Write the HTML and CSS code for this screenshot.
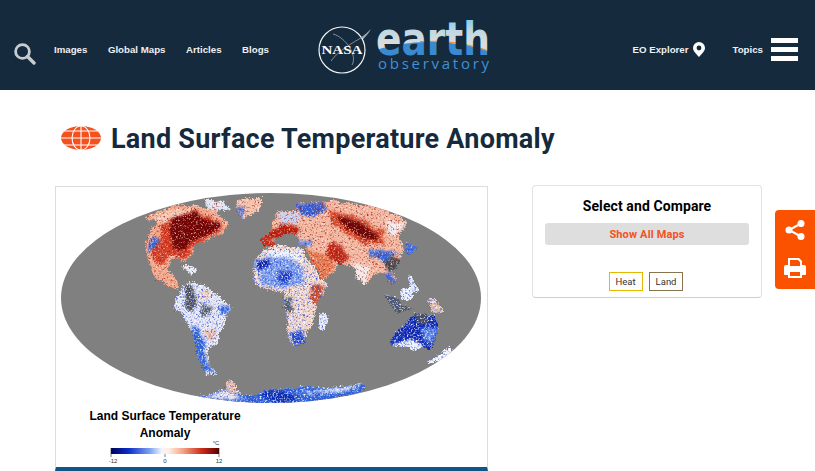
FILE: index.html
```html
<!DOCTYPE html>
<html lang="en">
<head>
  <meta charset="UTF-8">
  <meta name="viewport" content="width=device-width, initial-scale=1.0">
  <title>Land Surface Temperature Anomaly</title>
  <link rel="stylesheet" href="styles.css">
</head>
<body>
  <header class="site-header">
    <div class="nav-left">
      <svg class="search-icon" viewBox="0 0 22 22" width="22" height="22">
        <circle cx="8.500" cy="8.500" r="6.900" fill="none" stroke="#c9cccf" stroke-width="2.800"/>
        <path d="M13.500 13.500 L20 20" stroke="#c9cccf" stroke-width="3.400" stroke-linecap="round"/>
      </svg>
      <a class="nav-link" href="#">Images</a>
      <a class="nav-link" href="#">Global Maps</a>
      <a class="nav-link" href="#">Articles</a>
      <a class="nav-link" href="#">Blogs</a>
    </div>

    <svg class="logo" viewBox="318 0 174 90" width="174" height="90">
      <defs>
        <linearGradient id="earth-sky" gradientUnits="userSpaceOnUse" x1="0" y1="20" x2="0" y2="44">
          <stop offset="0" stop-color="#86cdea"/>
          <stop offset="0.45" stop-color="#c0d8e2"/>
          <stop offset="1" stop-color="#dcdcdc"/>
        </linearGradient>
        <pattern id="earth-fill" patternUnits="userSpaceOnUse" x="0" y="0" width="600" height="100">
          <rect x="370" y="10" width="125" height="50" fill="url(#earth-sky)"/>
          <path d="M370 52 Q430 31 495 53 V62 H370 Z" fill="#3a8ad2"/>
          <path d="M420 41.500 Q460 39 495 53" fill="none" stroke="#f08a2c" stroke-width="1"/>
        </pattern>
      </defs>
      <path d="M320 56 C340 53 360 40 371 29 C364 42 345 56 326 60" fill="#9aa6b0"/>
      <circle cx="342" cy="50" r="23" fill="#152a3d" stroke="#f2f4f5" stroke-width="1.200"/>
      <path d="M333 34 C345 37 358 55 352 65 M331 61 C338 51 352 43 366 35" fill="none" stroke="#9aa6b0" stroke-width="0.800"/>
      <text class="logo-nasa" x="342" y="54" text-anchor="middle" textLength="41" lengthAdjust="spacingAndGlyphs">NASA</text>
      <text class="logo-earth" x="376" y="55" textLength="114" lengthAdjust="spacingAndGlyphs" fill="url(#earth-fill)">earth</text>
      <text class="logo-sub" x="378" y="69" textLength="111">observatory</text>
    </svg>

    <div class="nav-right">
      <a class="nav-link" href="#">EO Explorer</a>
      <svg class="pin-icon" viewBox="0 0 12 15" width="12" height="15">
        <path fill-rule="evenodd" d="M6 0 A6 6 0 0 1 12 6 C12 9 8.500 12 6 15 C3.500 12 0 9 0 6 A6 6 0 0 1 6 0 Z M6 3.600 A2.400 2.400 0 1 0 6 8.400 A2.400 2.400 0 1 0 6 3.600 Z" fill="#fff"/>
      </svg>
      <a class="nav-link topics-link" href="#">Topics</a>
      <div class="burger"><span></span><span></span><span></span></div>
    </div>
  </header>

  <main class="page">
    <div class="title-row">
      <svg class="globe-icon" viewBox="0 0 40 24" width="40" height="24">
        <ellipse cx="20" cy="12" rx="20" ry="12" fill="#f4511e"/>
        <g fill="none" stroke="#fff" stroke-width="1.100">
          <ellipse cx="20" cy="12" rx="9" ry="12"/>
          <path d="M20 0 V24 M3 5 H37 M0 12 H40 M3 19 H37"/>
        </g>
      </svg>
      <h1>Land Surface Temperature Anomaly</h1>
    </div>

    <div class="columns">
      <figure class="map-figure">
        <svg class="world-map" viewBox="56 187 431 280" width="431" height="280">
          <defs>
            <clipPath id="globe-clip"><ellipse cx="271" cy="298" rx="210" ry="105"/></clipPath>
            <linearGradient id="scale-fill">
              <stop offset="0" stop-color="#00005a"/>
              <stop offset="0.16" stop-color="#0a2cc8"/>
              <stop offset="0.36" stop-color="#7ea2f0"/>
              <stop offset="0.47" stop-color="#f2f5fd"/>
              <stop offset="0.53" stop-color="#fdf0e8"/>
              <stop offset="0.66" stop-color="#f6a888"/>
              <stop offset="0.84" stop-color="#cc2c18"/>
              <stop offset="1" stop-color="#5a0000"/>
            </linearGradient>
            <filter id="rough-hot" x="-5%" y="-5%" width="110%" height="110%" color-interpolation-filters="sRGB">
              <feTurbulence type="fractalNoise" baseFrequency="0.1" numOctaves="4" seed="4" result="n1"/>
              <feDisplacementMap in="SourceGraphic" in2="n1" scale="8" xChannelSelector="R" yChannelSelector="G" result="shape"/>
              <feGaussianBlur in="shape" stdDeviation="1.100" result="soft"/>
              <feTurbulence type="fractalNoise" baseFrequency="0.55" numOctaves="2" seed="7" result="n2"/>
              <feDisplacementMap in="soft" in2="n2" scale="6" xChannelSelector="G" yChannelSelector="R" result="grain"/>
              <feComponentTransfer in="grain" result="land">
                <feFuncA type="linear" slope="6" intercept="-2.200"/>
              </feComponentTransfer>
              <feColorMatrix in="n2" values="0 0 0 0 1  0 0 0 0 0.94  0 0 0 0 0.92  2.600 0 0 0 -1.400"/>
              <feComposite in2="land" operator="in" result="light"/>
              <feColorMatrix in="n2" values="0 0 0 0 0.55  0 0 0 0 0.05  0 0 0 0 0.03  0 2.600 0 0 -1.400"/>
              <feComposite in2="land" operator="in" result="dark"/>
              <feMerge><feMergeNode in="land"/><feMergeNode in="dark"/><feMergeNode in="light"/></feMerge>
            </filter>
            <filter id="rough-cold" x="-5%" y="-5%" width="110%" height="110%" color-interpolation-filters="sRGB">
              <feTurbulence type="fractalNoise" baseFrequency="0.1" numOctaves="4" seed="4" result="n1"/>
              <feDisplacementMap in="SourceGraphic" in2="n1" scale="8" xChannelSelector="R" yChannelSelector="G" result="shape"/>
              <feGaussianBlur in="shape" stdDeviation="1.100" result="soft"/>
              <feTurbulence type="fractalNoise" baseFrequency="0.55" numOctaves="2" seed="7" result="n2"/>
              <feDisplacementMap in="soft" in2="n2" scale="6" xChannelSelector="G" yChannelSelector="R" result="grain"/>
              <feComponentTransfer in="grain" result="land">
                <feFuncA type="linear" slope="6" intercept="-2.200"/>
              </feComponentTransfer>
              <feColorMatrix in="n2" values="0 0 0 0 1  0 0 0 0 1  0 0 0 0 1  3 0 0 0 -1.500"/>
              <feComposite in2="land" operator="in" result="light"/>
              <feColorMatrix in="n2" values="0 0 0 0 0.16  0 0 0 0 0.3  0 0 0 0 0.82  0 2.800 0 0 -1.400"/>
              <feComposite in2="land" operator="in" result="dark"/>
              <feMerge><feMergeNode in="land"/><feMergeNode in="dark"/><feMergeNode in="light"/></feMerge>
            </filter>
          </defs>

          <ellipse cx="271" cy="298" rx="210" ry="105" fill="#808080"/>

          <g clip-path="url(#globe-clip)">
            <g filter="url(#rough-hot)">
              <!-- north america -->
              <path fill="#f2a98c" d="M145 219 L160 211 L175 206 L195 205 L215 211 L226 221 L224 233 L208 239 L196 244 L188 258 L184 264 L180 258 L171 260 L166 268 L172 276 L181 284 L177 289 L168 286 L157 278 L150 266 L147 256 L144 247 L149 232 L160 222 Z"/>
              <path fill="#d63f26" d="M160 222 L176 215 L195 211 L220 222 L220 232 L205 238 L190 250 L184 258 L170 256 L157 264 L152 254 L160 240 Z"/>
              <path fill="#720404" d="M174 216 L195 212 L204 219 L219 223 L218 231 L204 235 L192 241 L184 249 L172 250 L170 238 L170 228 Z"/>
              <path fill="#f6ccb8" d="M150 218 L172 210 L200 208 L176 216 L160 224 Z"/>
              <path fill="#3e68d6" d="M147 244 L156 236 L160 240 L155 250 L148 252 Z"/>
              <path fill="#dfe6f6" d="M203 199 L224 202 L232 209 L212 211 Z"/>
              <path fill="#e7eef8" d="M184 264 L200 270 L188 274 Z"/>
              <!-- greenland -->
              <path fill="#f5c4ad" d="M236 200 L262 197 L262 205 L252 216 L240 219 L236 210 Z"/>
              <path fill="#5d84e2" d="M236 208 L246 206 L242 218 L238 218 Z"/>
              <!-- iberia -->
              <path fill="#cc2c18" d="M261 236 L274 236 L275 246 L262 247 Z"/>
              <!-- eurasia -->
              <path fill="#f4b8a0" d="M270 235 L277 213 L297 210 L300 203 L337 202 L377 207 L398 215 L407 225 L397 237 L404 250 L400 258 L383 260 L397 280 L390 283 L385 274 L376 272 L365 287 L357 277 L350 263 L337 263 L337 270 L322 280 L308 253 L305 243 L298 238 L283 233 L270 243 Z"/>
              <path fill="#3460d8" d="M298 205 L322 203 L328 210 L312 216 L298 214 Z"/>
              <path fill="#c4d2f6" d="M278 214 L296 212 L300 222 L282 222 Z"/>
              <path fill="#b8200f" d="M270 232 L285 222 L300 226 L298 236 L283 234 L270 240 Z"/>
              <path fill="#d84a2c" d="M328 210 L352 214 L382 230 L386 244 L360 242 L332 224 Z"/>
              <path fill="#6a0606" d="M336 215 L352 220 L378 234 L376 241 L358 235 L340 223 Z"/>
              <path fill="#c02a18" d="M326 243 L340 244 L350 258 L340 264 L328 256 Z"/>
              <path fill="#e87a50" d="M308 250 L328 256 L336 266 L322 280 L312 262 Z"/>
              <path fill="#6a8ce6" d="M298 240 L312 240 L310 246 L298 246 Z"/>
              <path fill="#4a4e54" d="M384 258 L402 258 L396 272 L386 272 Z"/>
              <path fill="#3a6adc" d="M368 250 L400 252 L384 260 L372 258 Z"/>
              <path fill="#4468de" d="M384 274 L392 275 L396 283 L390 284 Z"/>
              <path fill="#f4eaea" d="M352 264 L370 266 L364 286 L358 280 Z"/>
              <path fill="#f0eef4" d="M388 220 L404 224 L394 236 L384 228 Z"/>
              <path fill="#3f6ede" d="M405 242 L418 247 L408 256 Z"/>
            </g>
            <g filter="url(#rough-cold)">
              <!-- south america -->
              <path fill="#e6e6f2" d="M183 285 L192 283 L205 285 L215 293 L228 305 L231 310 L223 325 L219 340 L210 346 L207 355 L210 367 L217 374 L206 373 L197 356 L194 340 L189 325 L177 310 L175 302 Z"/>
              <path fill="#4e5258" d="M185 286 L194 286 L198 300 L190 312 L184 304 Z"/>
              <path fill="#5a6068" d="M200 304 L212 306 L210 316 L202 314 Z"/>
              <path fill="#2e62d8" d="M192 326 L199 328 L206 350 L206 362 L214 373 L204 370 L197 354 L193 340 Z"/>
              <path fill="#3a68dc" d="M222 303 L231 308 L224 316 L218 310 Z"/>
              <path fill="#f2b094" d="M204 330 L216 330 L214 340 L206 338 Z"/>
              <path fill="#f2c8b4" d="M200 290 L212 292 L208 300 L200 298 Z"/>
              <!-- africa -->
              <path fill="#f6d6c6" d="M258 255 L270 247 L300 247 L307 257 L320 280 L329 282 L322 295 L315 305 L313 315 L308 335 L302 343 L293 347 L289 338 L287 320 L285 303 L283 293 L270 290 L255 285 L252 270 Z"/>
              <path fill="#f0f2fa" d="M262 250 L298 250 L304 262 L280 258 Z"/>
              <path fill="#7c9cec" d="M254 264 L266 254 L288 258 L306 268 L303 282 L284 288 L262 286 Z"/>
              <path fill="#08189c" d="M257 262 L268 258 L271 267 L260 269 Z"/>
              <path fill="#1c3cc6" d="M278 270 L292 272 L287 284 L277 281 Z"/>
              <path fill="#c84a2c" d="M312 284 L326 285 L316 304 L310 298 Z"/>
              <path fill="#5a6068" d="M285 298 L291 298 L291 312 L286 310 Z"/>
              <path fill="#2448c8" d="M289 332 L306 330 L304 342 L294 346 Z"/>
              <path fill="#e6eaf6" d="M319 314 L329 313 L325 331 L318 329 Z"/>
              <!-- islands -->
              <path fill="#55595e" d="M386 292 L396 297 L404 306 L414 308 L398 313 L388 303 Z"/>
              <path fill="#eef0f6" d="M400 290 L411 288 L411 300 L402 301 Z"/>
              <path fill="#e4c0ae" d="M426 298 L438 303 L446 313 L432 311 Z"/>
              <path fill="#e2e6f0" d="M408 274 L418 286 L419 293 L410 291 Z"/>
              <!-- australia -->
              <path fill="#0e26b0" d="M400 328 L410 318 L420 315 L425 320 L435 315 L438 330 L437 340 L430 350 L420 345 L410 342 L392 346 L390 340 Z"/>
              <path fill="#4a4e54" d="M416 313 L428 313 L428 323 L416 323 Z"/>
              <path fill="#5c86ea" d="M420 330 L438 326 L434 344 L424 340 Z"/>
              <path fill="#eef2fa" d="M392 345 L410 339 L424 344 L416 350 Z"/>
              <path fill="#f4f6fb" d="M426 362 L440 354 L450 347 L453 352 L440 362 Z"/>
              <!-- antarctica -->
              <path fill="#2f62dc" d="M198 396 L225 390 L250 396 L265 391 L300 388 L340 386 L366 384 L368 390 L345 395 L320 402 L250 408 L200 402 Z"/>
              <path fill="#0a2ab0" d="M260 392 L285 391 L298 398 L280 405 Z"/>
              <path fill="#f0e8ea" d="M202 396 L226 391 L246 398 L225 400 Z"/>
              <path fill="#dfe8fa" d="M296 392 L340 387 L364 385 L340 393 Z"/>
              <path fill="#f0b8a0" d="M227 381 L235 382 L239 394 L229 391 Z"/>
            </g>
          </g>

          <text class="map-title" x="165" y="420" text-anchor="middle">Land Surface Temperature</text>
          <text class="map-title" x="165" y="437" text-anchor="middle">Anomaly</text>
          <text class="map-scale" x="216" y="445" text-anchor="middle">°C</text>
          <rect x="111" y="448" width="108" height="6" fill="url(#scale-fill)"/>
          <path d="M111 448 V457 M165 454 V457 M219 448 V457" stroke="#222" stroke-width="0.600"/>
          <text class="map-scale" x="113" y="463" text-anchor="middle">-12</text>
          <text class="map-scale" x="165" y="463" text-anchor="middle">0</text>
          <text class="map-scale" x="219" y="463" text-anchor="middle">12</text>
        </svg>
      </figure>

      <aside class="compare-card">
        <h3>Select and Compare</h3>
        <button class="show-all">Show All Maps</button>
        <div class="tag-row">
          <span class="tag tag-heat">Heat</span>
          <span class="tag tag-land">Land</span>
        </div>
      </aside>
    </div>
  </main>

  <div class="side-tab">
    <svg viewBox="0 0 22 22" width="22" height="22">
      <path d="M17 4.500 L5 11 L17 17.500" fill="none" stroke="#fff" stroke-width="2"/>
      <circle cx="17" cy="4.500" r="3.500" fill="#fff"/>
      <circle cx="5" cy="11" r="3.500" fill="#fff"/>
      <circle cx="17" cy="17.500" r="3.500" fill="#fff"/>
    </svg>
    <svg viewBox="0 0 24 22" width="24" height="22">
      <path fill="#fff" fill-rule="evenodd" d="M5 1 H16 L19 4 V8 H21 Q23 8 23 10 V17 Q23 18 22 18 H19 V21 H5 V18 H2 Q1 18 1 17 V10 Q1 8 3 8 H5 Z M7 3 V9 H17 V5 L15 3 Z M7 15 V19 H17 V15 Z"/>
    </svg>
  </div>
</body>
</html>
```

FILE: styles.css
```css
* {
  margin: 0;
  padding: 0;
  box-sizing: border-box;
}

html, body {
  height: 471px;
  overflow: hidden;
}

body {
  background: white;
  font-family: 'Liberation Sans', Arial, sans-serif;
  color: #152a3d;
}

.site-header {
  height: 90px;
  background: #152a3d;
  display: flex;
  align-items: center;
  padding: 9px 17px 0 14px;
}

.nav-left {
  display: flex;
  align-items: center;
  flex: none;
  width: 255px;
}

.nav-left .nav-link {
  margin-left: 20.5px;
}

.nav-left .search-icon + .nav-link {
  margin-left: 18px;
}

.search-icon {
  flex: none;
  margin-top: 8px;
}

.nav-link {
  font-size: 9.7px;
  font-weight: 700;
  color: #eef0f2;
  text-decoration: none;
  white-space: nowrap;
}

.logo {
  flex: none;
  align-self: flex-start;
  margin-left: 49px;
  margin-top: -9px;
}

.logo-nasa {
  font-family: 'Liberation Serif', serif;
  font-size: 13px;
  font-weight: 700;
  fill: #fff;
}

.logo-earth {
  font-family: 'DejaVu Sans', sans-serif;
  font-size: 46px;
  font-weight: 700;
}

.logo-sub {
  font-family: 'Open Sans', sans-serif;
  font-size: 15px;
  fill: #4190d4;
}

.nav-right {
  display: flex;
  align-items: center;
  margin-left: auto;
}

.pin-icon {
  margin-left: 4px;
}

.topics-link {
  margin-left: 28px;
}

.burger {
  width: 27px;
  margin-left: 8px;
  display: flex;
  flex-direction: column;
  gap: 4px;
}

.burger span {
  height: 5px;
  background: white;
}

.page {
  padding: 0 0 0 55px;
}

.title-row {
  display: flex;
  align-items: center;
  gap: 10px;
  height: 96px;
  padding-left: 6px;
}

.title-row h1 {
  margin-top: 2px;
  font-family: Roboto, sans-serif;
  font-size: 27px;
  font-weight: 700;
  letter-spacing: 0.25px;
  color: #152a3d;
}

.columns {
  display: flex;
  align-items: flex-start;
  gap: 44px;
}

.map-figure {
  width: 433px;
  height: 285px;
  border: 1px solid #dcdcdc;
  border-bottom: 4px solid #0f5585;
}

.world-map {
  display: block;
}

.map-title {
  font-size: 12px;
  font-weight: 700;
  fill: #000;
}

.map-scale {
  font-size: 6px;
  fill: #333;
}

.compare-card {
  width: 230px;
  height: 113px;
  margin-top: -1px;
  padding: 12px 12px 0;
  background: white;
  border: 1px solid #e2e2e2;
  border-bottom-color: #cfcfcf;
  border-radius: 4px;
  text-align: center;
}

.compare-card h3 {
  font-family: Roboto, sans-serif;
  font-size: 14px;
  font-weight: 700;
  line-height: 17px;
  letter-spacing: 0.1px;
  color: #000;
}

.show-all {
  display: block;
  width: 100%;
  height: 22px;
  margin-top: 8px;
  background: #dedede;
  border: none;
  border-radius: 3px;
  font-family: Roboto, sans-serif;
  font-size: 11px;
  font-weight: 700;
  letter-spacing: 0.15px;
  color: #f4511e;
}

.tag-row {
  display: flex;
  justify-content: center;
  gap: 6px;
  margin-top: 27px;
  padding-right: 2px;
}

.tag {
  height: 19px;
  padding: 0 6px;
  font-family: Roboto, sans-serif;
  font-size: 9.5px;
  line-height: 17px;
  color: #333;
}

.tag-heat {
  border: 1px solid #e6b800;
}

.tag-land {
  border: 1px solid #8a7350;
}

.side-tab {
  position: absolute;
  left: 775px;
  top: 210px;
  width: 40px;
  height: 79px;
  background: #fb5200;
  border-radius: 4px 0 0 4px;
  display: flex;
  flex-direction: column;
  align-items: center;
  gap: 16px;
  padding-top: 9px;
}
```
